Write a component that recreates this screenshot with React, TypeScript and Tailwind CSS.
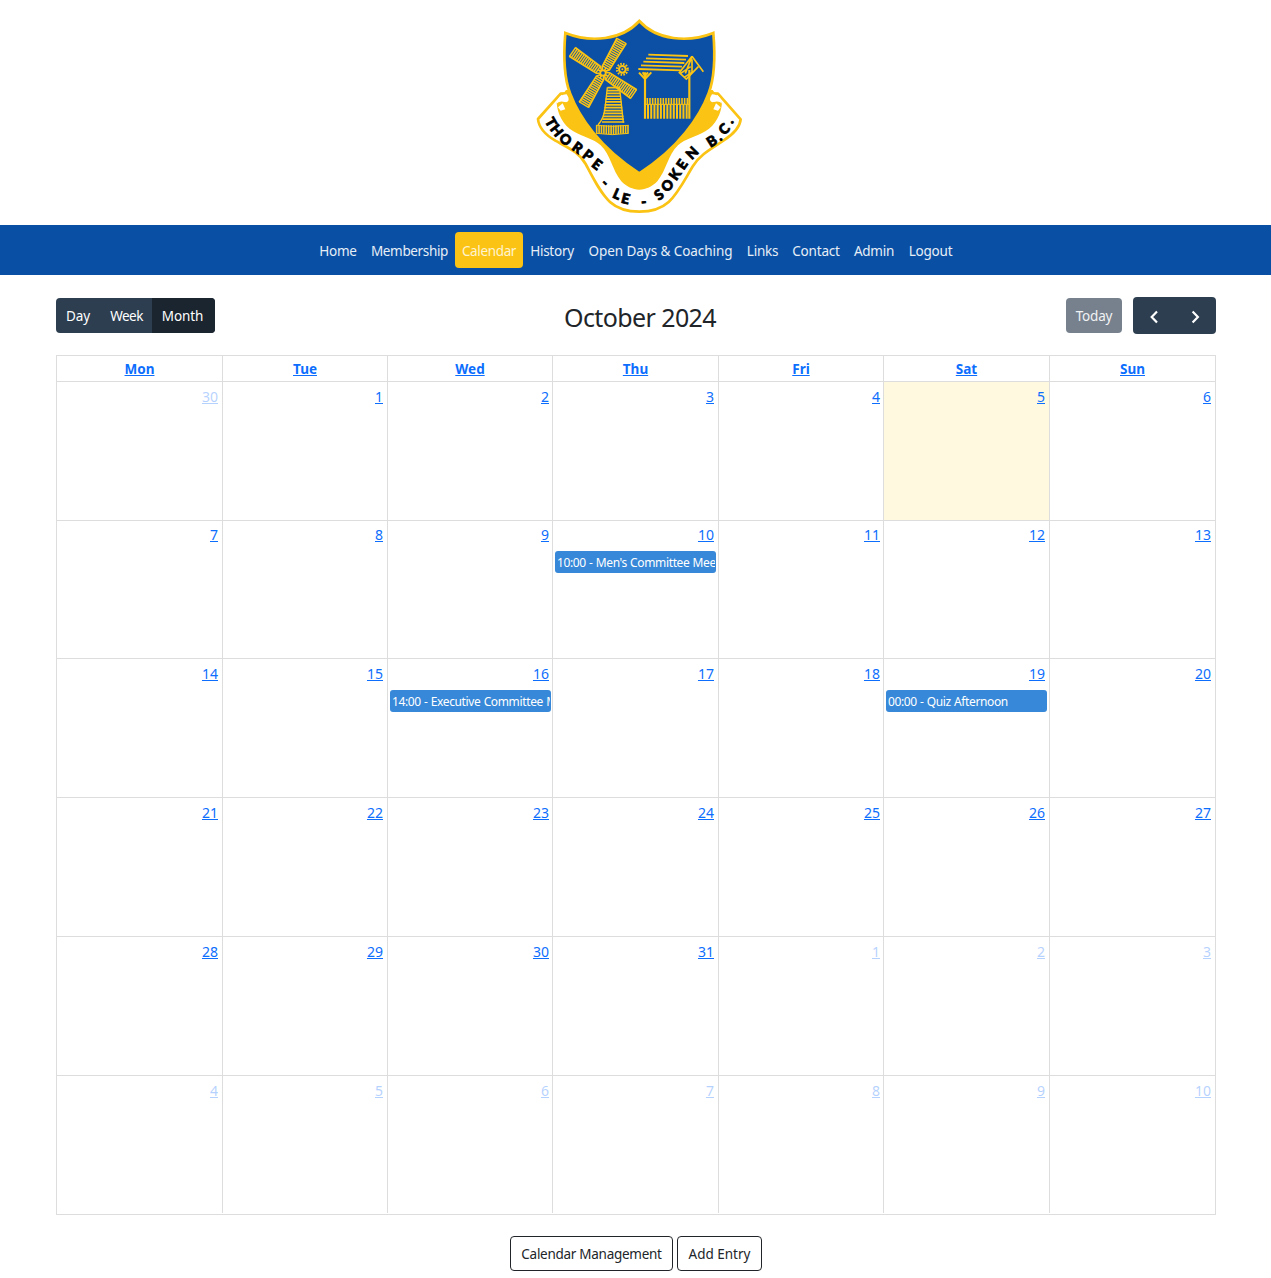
import React from "react";

const NAV = [
  { label: "Home", cls: "w-[52px] tracking-[-0.25px]" },
  { label: "Membership", cls: "w-[91px] tracking-[-0.35px]" },
  { label: "Calendar", cls: "w-[68px] tracking-[-0.35px] rounded bg-[#fbc313]", active: true },
  { label: "History", cls: "w-[58px] tracking-[-0.25px]" },
  { label: "Open Days & Coaching", cls: "w-[159px] tracking-[-0.06px]" },
  { label: "Links", cls: "w-[45px] tracking-[-0.25px]" },
  { label: "Contact", cls: "w-[62px] tracking-[-0.2px]" },
  { label: "Admin", cls: "w-[54px] tracking-[-0.25px]" },
  { label: "Logout", cls: "w-[59px] tracking-[-0.2px]" },
];

const DAYS = ["Mon", "Tue", "Wed", "Thu", "Fri", "Sat", "Sun"];

const EVENTS: Record<number, string> = {
  10: "10:00 - Men's Committee Meeting",
  16: "14:00 - Executive Committee Meeting",
  19: "00:00 - Quiz Afternoon",
};

const CELLS = Array.from({ length: 42 }, (_, i) => {
  if (i === 0) return { day: 30, muted: true };
  if (i <= 31) return { day: i, muted: false };
  return { day: i - 31, muted: true };
});

const LETTERS: [string, number, number, number][] = [
  ["T", 63, 337, 60],
  ["H", 80, 361, 52],
  ["O", 107, 388, 42],
  ["R", 143, 413, 36],
  ["P", 174, 436, 38],
  ["E", 201, 463, 38],
  ["-", 226, 518, 45],
  ["L", 261, 552, 24],
  ["E", 287, 566, 14],
  ["-", 341, 575, -4],
  ["S", 387, 554, -36],
  ["O", 412, 526, -48],
  ["K", 435, 493, -55],
  ["E", 456, 463, -55],
  ["N", 486, 429, -45],
  ["B", 545, 393, -32],
  [".", 566, 379, -36],
  ["C", 582, 357, -46],
  [".", 598, 329, -50],
];

function lines(n: number, f: (t: number) => string) {
  return Array.from({ length: n }, (_, i) => f(i / (n - 1))).join("");
}

function Sail({ angle }: { angle: number }) {
  return (
    <g transform={`translate(219 189) rotate(${angle})`} fill="none">
      <path d="M6 -5L16 -12L112 -16M8 4L18 12L112 16M8 0H18" strokeWidth="5" />
      <path d={lines(15, (t) => `M${18 + t * 93} ${-12 - t * 4}V${12 + t * 4}`)} strokeWidth="4.4" />
    </g>
  );
}

function Crest() {
  return (
    <svg viewBox="0 0 660 630" className="ml-[9px] h-[210px] w-[220px]" role="img" aria-label="Thorpe-le-Soken B.C.">
      <path
        d="M112 250L92 251L24 327C26 350 42 372 76 392C120 416 148 428 167 462C190 505 210 548 240 576C262 596 290 605 328 605C366 605 394 596 416 576C446 548 466 505 489 468C508 436 540 418 580 392C614 370 630 352 632 328L564 251L544 250Z"
        fill="#fff"
        stroke="#fbc313"
        strokeWidth="8"
        strokeLinejoin="round"
      />
      <path
        d="M108 240L80 278C82 310 98 344 130 364C160 382 190 386 212 406C242 434 246 480 274 514C290 530 308 539 328 539C348 539 366 530 382 514C410 480 414 434 444 406C466 386 496 382 526 364C558 344 574 310 576 278L548 240Z"
        fill="#fbc313"
      />
      <path
        d="M110 253C92 253 82 264 80 281C86 275 94 272 104 276C114 278 118 272 115 262ZM546 253C564 253 574 264 576 281C570 275 562 272 552 276C542 278 538 272 541 262ZM98 280L84 292L92 302L106 298ZM558 280L572 292L564 302L550 298Z"
        fill="#fff"
      />
      <path
        d="M328 33C302 62 270 78 226 84C184 90 144 84 106 69C100 140 101 200 120 250C146 320 210 415 328 490C446 415 510 320 536 250C555 200 556 140 550 69C512 84 472 90 430 84C386 78 354 62 328 33Z"
        fill="#0b50a4"
        stroke="#fbc313"
        strokeWidth="8"
      />
      <g stroke="#fbc313" fill="none">
        <g>
          <path d="M232 232L225 295C223 315 215 332 204 345M268 228L272 262L280 338" strokeWidth="4" />
          <path d={lines(13, (t) => `M${232 - t * 16} ${233 + t * 103}H${268 + t * 15}`)} strokeWidth="5.2" />
          <path d={lines(14, (t) => `M${200 + t * 94} 346V${373 - Math.abs(t - 0.5) * 6}`)} strokeWidth="4.8" />
          <path d="M198 346Q246 352 296 346M198 370Q246 378 296 370" strokeWidth="3" />
        </g>
        <Sail angle={-60} />
        <Sail angle={34.4} />
        <Sail angle={121} />
        <Sail angle={214.4} />
        <circle cx="219" cy="189" r="8" strokeWidth="5" fill="#0b50a4" />
        <circle cx="277" cy="178" r="10" strokeWidth="6" />
        <circle cx="277" cy="178" r="16" strokeWidth="7" strokeDasharray="4.6 3.8" />
        <circle cx="277" cy="178" r="3" fill="#fbc313" stroke="none" />
        <path d="M355 134L474 138M348 145L468 149M340 155L463 159M333 166L456 170M325 177L452 181" strokeWidth="5.4" />
        <path d="M486 139L520 185M486 139L448 188L469 207L505 170M486 139L466 190M482 170L452 190M486 148V187L462 202" strokeWidth="5" />
        <path d="M345 187V326M478 180V326" strokeWidth="6.5" />
        <path d="M327 188L345 207L364 187M338 187L345 198L354 187" strokeWidth="6" />
        <path d={lines(16, (t) => `M${352 + t * 120} 264V283`)} strokeWidth="4.8" />
        <path d={lines(13, (t) => `M${354 + t * 116} 283V326`)} strokeWidth="6" />
        <path d="M345 283H480" strokeWidth="3" />
      </g>
      <g
        fill="#000"
        stroke="#000"
        strokeWidth="2.4"
        fontFamily="Lato, sans-serif"
        fontWeight="900"
        fontSize="42"
        textAnchor="middle"
      >
        {LETTERS.map(([ch, x, y, a], i) => (
          <text key={i} transform={`translate(${x} ${y}) rotate(${a})`} y="15">
            {ch}
          </text>
        ))}
      </g>
    </svg>
  );
}

function Chevron({ d }: { d: string }) {
  return (
    <svg viewBox="0 0 8 12" className="h-3 w-2 overflow-visible" fill="none" stroke="#fff" strokeWidth="2.2">
      <path d={d} />
    </svg>
  );
}

export default function App() {
  return (
    <div className="h-[1278px] w-[1271px] overflow-hidden bg-white font-['Noto_Sans',sans-serif] text-[13.5px] text-[#212529]">
      <header className="flex h-[225px] justify-center pt-[10px]">
        <Crest />
      </header>

      <nav className="flex h-[50px] justify-center bg-[#0950a5] py-[7px] pl-px">
        {NAV.map((n) => (
          <a
            key={n.label}
            href="#"
            className={`flex h-9 shrink-0 items-center justify-center whitespace-nowrap pt-[2px] ${n.cls} ${
              n.active ? "text-[#fff3d0]" : "text-[#e7eef6]"
            }`}
          >
            {n.label}
          </a>
        ))}
      </nav>

      <main className="ml-[56px] w-[1160px]">
        <div className="grid h-[80px] grid-cols-[1fr_auto_1fr] items-start pt-[22px]">
          <div className="mt-px flex h-[35px] w-[159px] overflow-hidden rounded bg-[#2c3e50] text-white">
            <button className="w-[44px] pt-[2px] tracking-[-0.1px]">Day</button>
            <button className="w-[52px] pt-[2px] pl-px tracking-[-0.5px]">Week</button>
            <button className="w-[63px] bg-[#1a252f] pt-[2px] pr-[2px] tracking-[-0.1px]">Month</button>
          </div>
          <h2 className="ml-[8px] text-[25px] leading-10 tracking-[-0.6px]">October 2024</h2>
          <div className="flex items-start justify-end gap-[11px]">
            <button className="mt-px h-[35px] w-[56px] rounded bg-[#76818d] pt-[2px] tracking-[-0.2px] text-[#f1f2f4]">
              Today
            </button>
            <div className="flex h-[37px] w-[83px] rounded bg-[#2c3e50] pt-[3px]">
              <button className="flex w-[42px] items-center justify-center">
                <Chevron d="M7 0.6L1.7 6L7 11.4" />
              </button>
              <button className="flex w-[41px] items-center justify-center">
                <Chevron d="M0.6 0.6L5.9 6L0.6 11.4" />
              </button>
            </div>
          </div>
        </div>

        <section className="h-[860px] border border-[#ddd]">
          <div className="grid h-[26px] grid-cols-[166px_165px_165px_166px_165px_166px_165px] border-b border-[#ddd]">
            {DAYS.map((d) => (
              <div key={d} className="flex items-center justify-center border-r border-[#ddd] pt-px last:border-r-0">
                <a href="#" className="font-bold text-[#0d6efd] underline">{d}</a>
              </div>
            ))}
          </div>
          <div className="grid grid-cols-[166px_165px_165px_166px_165px_166px_165px] grid-rows-[139px_138px_139px_139px_139px_137px]">
            {CELLS.map((c, i) => (
              <div
                key={i}
                className={`flex flex-col overflow-hidden border-[#ddd] ${i % 7 === 6 ? "" : "border-r"} ${
                  i < 35 ? "border-b" : ""
                } ${i === 5 ? "bg-[#fffadf]" : ""}`}
              >
                <a
                  href="#"
                  className={`self-end text-sm leading-[21px] text-[#0d6efd] underline ${
                    i > 6 && i < 14 ? "pt-[3px] pb-[2px]" : "pt-1 pb-[2px]"
                  } ${i % 7 === 2 || i % 7 === 4 ? "mr-[3px]" : "mr-1"} ${c.muted ? "opacity-30" : ""}`}
                >
                  {c.day}
                </a>
                {!c.muted && EVENTS[c.day] && (
                  <div
                    className={`mt-1 ml-[2px] h-[22px] rounded-[3px] bg-[#3788d8] px-[2px] text-[12px] leading-[23px] tracking-[-0.36px] [word-spacing:0.4px] whitespace-nowrap text-white ${
                      c.day === 16 ? "mr-px" : "mr-[2px]"
                    }`}
                  >
                    <div className="-mr-px overflow-hidden">{EVENTS[c.day]}</div>
                  </div>
                )}
              </div>
            ))}
          </div>
        </section>
      </main>

      <footer className="flex justify-center gap-1 pt-[21px] pl-px">
        <button className="h-[35px] w-[163px] rounded border border-[#212529] pt-[2px] tracking-[-0.28px]">
          Calendar Management
        </button>
        <button className="h-[35px] w-[85px] rounded border border-[#212529] pt-[2px]">Add Entry</button>
      </footer>
    </div>
  );
}
